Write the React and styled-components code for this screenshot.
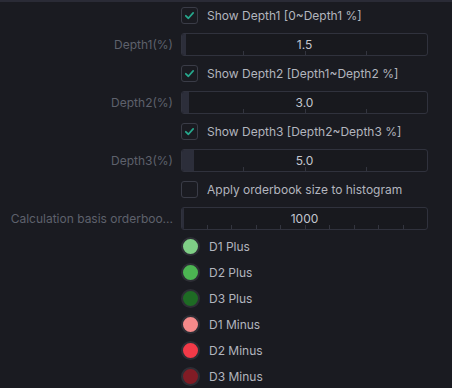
import React from "react";
import styled, { createGlobalStyle } from "styled-components";

const GlobalStyle = createGlobalStyle`
  html, body {
    margin: 0;
    padding: 0;
    background: #1a1b21;
  }
  body {
    font-family: Inter, "Noto Sans", sans-serif;
    -webkit-font-smoothing: antialiased;
  }
`;

const Page = styled.div`
  width: 452px;
  height: 388px;
  overflow: hidden;
  background: #1a1b21;
`;

const TopBar = styled.div`
  height: 2px;
  background: #2a2b36;
`;

const Form = styled.div`
  display: flex;
  flex-direction: column;
  gap: 3px;
`;

const Row = styled.div`
  display: grid;
  grid-template-columns: 166px 247px;
  column-gap: 8px;
  padding-left: 7px;
  height: 26px;
  align-items: center;
`;

const Label = styled.div`
  font-size: 12px;
  color: #5e616c;
  text-align: right;
  white-space: nowrap;
`;

const CheckLine = styled.label`
  display: flex;
  align-items: center;
  gap: 9px;
  font-size: 12px;
  color: #b2b5be;
  white-space: nowrap;
`;

const Box = styled.span`
  width: 15px;
  height: 15px;
  border: 1px solid #3a3c47;
  border-radius: 3px;
  display: flex;
  align-items: center;
  justify-content: center;
  flex: none;
`;

const Slider = styled.div`
  position: relative;
  height: 21px;
  border: 1px solid #30323d;
  border-radius: 3px;
  background: #18191e;
  display: flex;
  align-items: center;
  justify-content: center;
  font-size: 12px;
  color: #c3c6cf;
  overflow: hidden;
`;

const Fill = styled.div`
  position: absolute;
  left: 0;
  top: 0;
  bottom: 0;
  background: #2c2e3a;
`;

const Tick = styled.div`
  position: absolute;
  bottom: 0;
  width: 1px;
  height: 4px;
  background: #33353f;
`;

const Value = styled.span`
  position: relative;
`;

const Colors = styled.div`
  display: flex;
  flex-direction: column;
  margin-top: -1px;
`;

const Dot = styled.span`
  width: 15px;
  height: 15px;
  border-radius: 50%;
  background: ${(p) => p.color};
  border: 2px solid #2d2e35;
  flex: none;
`;

const Check = () => (
  <svg width="11" height="11" viewBox="0 0 12 12">
    <path
      d="M2 6.3 L4.8 9 L10 3.2"
      fill="none"
      stroke="#27a88d"
      strokeWidth="1.9"
      strokeLinecap="round"
      strokeLinejoin="round"
    />
  </svg>
);

const CheckRow = ({ checked, children }) => (
  <Row>
    <span />
    <CheckLine>
      <Box>{checked && <Check />}</Box>
      {children}
    </CheckLine>
  </Row>
);

const SliderRow = ({ label, value, pct, ticks }) => (
  <Row>
    <Label title={label}>{label}</Label>
    <Slider>
      <Fill style={{ width: pct + "%" }} />
      {Array.from({ length: ticks - 1 }, (_, i) => (
        <Tick key={i} style={{ left: ((i + 1) * 100) / ticks + "%" }} />
      ))}
      <Value>{value}</Value>
    </Slider>
  </Row>
);

const colors = [
  ["D1 Plus", "#7fcf86"],
  ["D2 Plus", "#4cb552"],
  ["D3 Plus", "#1e6b24"],
  ["D1 Minus", "#f58a8a"],
  ["D2 Minus", "#f23a48"],
  ["D3 Minus", "#811c25"],
];

export default function App() {
  return (
    <Page>
      <GlobalStyle />
      <TopBar />
      <Form>
        <CheckRow checked>Show Depth1 [0~Depth1 %]</CheckRow>
        <SliderRow label="Depth1(%)" value="1.5" pct={1.5} ticks={4} />
        <CheckRow checked>Show Depth2 [Depth1~Depth2 %]</CheckRow>
        <SliderRow label="Depth2(%)" value="3.0" pct={3} ticks={4} />
        <CheckRow checked>Show Depth3 [Depth2~Depth3 %]</CheckRow>
        <SliderRow label="Depth3(%)" value="5.0" pct={5} ticks={4} />
        <CheckRow>Apply orderbook size to histogram</CheckRow>
        <SliderRow
          label="Calculation basis orderboo..."
          value="1000"
          pct={1}
          ticks={10}
        />
        <Colors>
          {colors.map(([name, c]) => (
            <Row key={name}>
              <span />
              <CheckLine>
                <Dot color={c} />
                {name}
              </CheckLine>
            </Row>
          ))}
        </Colors>
      </Form>
    </Page>
  );
}
